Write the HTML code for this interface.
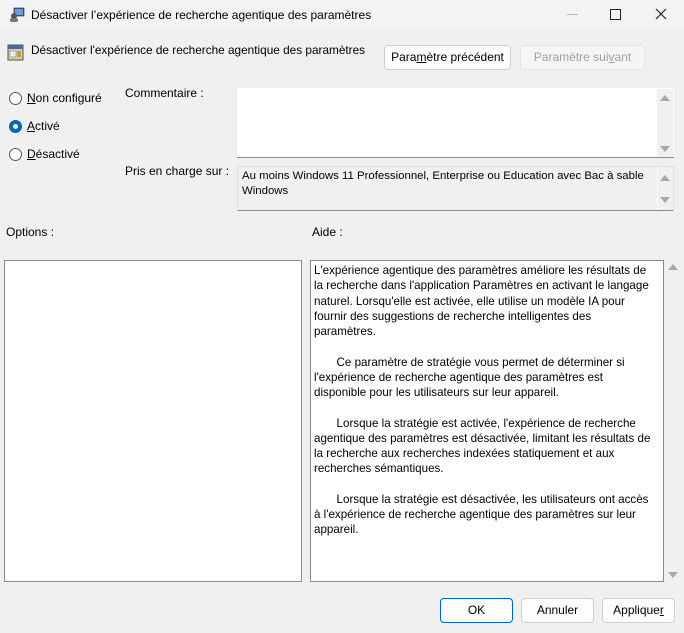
<!DOCTYPE html>
<html><head><meta charset="utf-8"><style>
*{margin:0;padding:0;box-sizing:border-box}
body{width:684px;height:633px;background:#f0f0f0;font-family:"Liberation Sans",sans-serif;font-size:12px;color:#000;position:relative;overflow:hidden}
.a{position:absolute;white-space:nowrap}
.tb{position:absolute;left:0;top:0;width:684px;height:30px;background:#f3f3f3}
.btn{position:absolute;height:25px;border:1px solid #d0d0d0;border-radius:4px;background:#fdfdfd;text-align:center;line-height:23px;font-size:12px}
.box{position:absolute;background:#fff;border:1px solid #8a8a8a}
.radio{position:absolute;width:13px;height:13px;border-radius:50%;border:1px solid #5a5a5a;background:#fff}
.tri{position:absolute;width:0;height:0;border-left:5px solid transparent;border-right:5px solid transparent}
.up{border-bottom:6px solid #a8a8a8}
.dn{border-top:6px solid #a8a8a8}
u{text-decoration:underline}
</style></head><body>
<div class="tb"></div>
<svg class="a" style="left:9px;top:7px" width="16" height="16" viewBox="0 0 16 16"><rect x="5" y="1" width="10" height="8" fill="#2a5caa" stroke="#333" stroke-width=".6"/><rect x="6" y="2" width="8" height="6" fill="#6aa0e0"/><circle cx="5" cy="9" r="3" fill="#555"/><rect x="1" y="11" width="8" height="4" rx="2" fill="#777"/></svg>
<div class="a" style="left:31px;top:8px;font-size:12px">Désactiver l’expérience de recherche agentique des paramètres</div>
<div class="a" style="left:567px;top:14px;width:11px;height:1px;background:#bbb"></div>
<div class="a" style="left:610px;top:9px;width:11px;height:11px;border:1px solid #222"></div>
<svg class="a" style="left:655px;top:8px" width="12" height="12"><path d="M1 1L11 11M11 1L1 11" stroke="#222" stroke-width="1.2"/></svg>

<svg class="a" style="left:7px;top:44px" width="17" height="17" viewBox="0 0 17 17"><rect x="1" y="1" width="15" height="15" fill="#d8d0a0" stroke="#555"/><rect x="1" y="1" width="15" height="4" fill="#4a6a9a"/><rect x="3" y="7" width="6" height="6" fill="#eee" stroke="#777" stroke-width=".5"/><rect x="10" y="7" width="4" height="6" fill="#c8a040"/></svg>
<div class="a" style="left:31px;top:43px;font-size:11.8px">Désactiver l'expérience de recherche agentique des paramètres</div>
<div class="btn" style="left:384px;top:45px;width:127px">Para<u>m</u>ètre précédent</div>
<div class="btn" style="left:520px;top:45px;width:125px;color:#a0a0a0;background:#f5f5f5;border-color:#e4e4e4">Paramètre sui<u>v</u>ant</div>

<div class="radio" style="left:9px;top:92px"></div>
<div class="a" style="left:27px;top:91px"><u>N</u>on configuré</div>
<div class="radio" style="left:9px;top:120px;background:#0067c0;border-color:#0067c0"><div style="position:absolute;left:3px;top:3px;width:5px;height:5px;border-radius:50%;background:#fff"></div></div>
<div class="a" style="left:27px;top:119px"><u>A</u>ctivé</div>
<div class="radio" style="left:9px;top:148px"></div>
<div class="a" style="left:27px;top:147px"><u>D</u>ésactivé</div>

<div class="a" style="left:125px;top:86px">Commentaire :</div>
<div class="a" style="left:237px;top:88px;width:437px;height:70px;background:#fff;border-bottom:1px solid #8a8a8a"></div>
<div class="a" style="left:657px;top:89px;width:16px;height:68px;background:#f0f0f0"></div>
<div class="tri up" style="left:660px;top:95px"></div>
<div class="tri dn" style="left:660px;top:146px"></div>

<div class="a" style="left:125px;top:164px">Pris en charge sur :</div>
<div class="a" style="left:237px;top:166px;width:437px;height:45px;border:1px solid #e0e0e0;border-bottom:1px solid #8a8a8a;background:#f0f0f0"></div>
<div class="a" style="left:657px;top:167px;width:1px;height:43px;background:#fff"></div>
<div class="a" style="left:242px;top:169px;line-height:15px;font-size:11.4px">Au moins Windows 11 Professionnel, Enterprise ou Education avec Bac à sable<br>Windows</div>
<div class="tri up" style="left:660px;top:175px"></div>
<div class="tri dn" style="left:660px;top:197px"></div>

<div class="a" style="left:6px;top:225px">Options :</div>
<div class="a" style="left:312px;top:225px">Aide :</div>

<div class="box" style="left:4px;top:260px;width:298px;height:322px"></div>
<div class="box" style="left:310px;top:260px;width:354px;height:322px"></div>
<div class="a" style="left:314px;top:263px;line-height:15.25px;font-size:11.6px">L'expérience agentique des paramètres améliore les résultats de<br>la recherche dans l'application Paramètres en activant le langage<br>naturel. Lorsqu'elle est activée, elle utilise un modèle IA pour<br>fournir des suggestions de recherche intelligentes des<br>paramètres.<br><br>&nbsp;&nbsp;&nbsp;&nbsp;&nbsp;&nbsp;&nbsp;Ce paramètre de stratégie vous permet de déterminer si<br>l'expérience de recherche agentique des paramètres est<br>disponible pour les utilisateurs sur leur appareil.<br><br>&nbsp;&nbsp;&nbsp;&nbsp;&nbsp;&nbsp;&nbsp;Lorsque la stratégie est activée, l'expérience de recherche<br>agentique des paramètres est désactivée, limitant les résultats de<br>la recherche aux recherches indexées statiquement et aux<br>recherches sémantiques.<br><br>&nbsp;&nbsp;&nbsp;&nbsp;&nbsp;&nbsp;&nbsp;Lorsque la stratégie est désactivée, les utilisateurs ont accès<br>à l'expérience de recherche agentique des paramètres sur leur<br>appareil.</div>
<div class="tri up" style="left:668px;top:264px"></div>
<div class="tri dn" style="left:668px;top:572px"></div>

<div class="btn" style="left:440px;top:598px;width:73px;border-color:#0067c0">OK</div>
<div class="btn" style="left:521px;top:598px;width:73px">Annuler</div>
<div class="btn" style="left:602px;top:598px;width:73px">Applique<u>r</u></div>
</body></html>
